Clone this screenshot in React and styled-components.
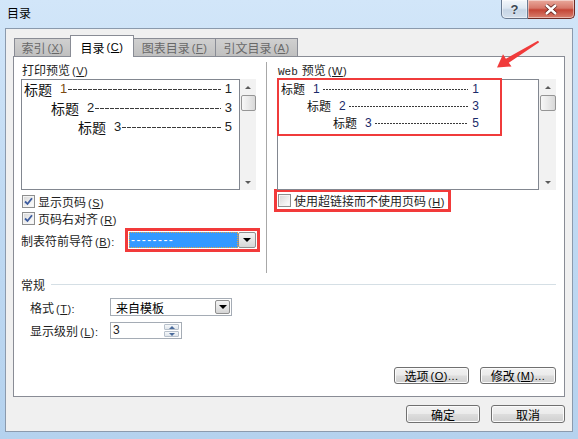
import React from 'react';
import styled, { createGlobalStyle } from 'styled-components';

const GlobalStyle = createGlobalStyle`
  *, *::before, *::after { box-sizing: border-box; }
  html, body { margin: 0; padding: 0; }
  body {
    font-family: "Liberation Sans", "Noto Sans CJK SC", sans-serif;
    font-size: 12px;
    color: #1e1e1e;
  }
`;

const Window = styled.div`
  position: relative;
  width: 578px;
  height: 439px;
  display: flex;
  flex-direction: column;
  overflow: hidden;
  background: linear-gradient(180deg, #d2e6f9 0%, #c0daf3 45%, #b5d2ee 100%);
`;

const TitleBar = styled.div`
  height: 28px;
  flex: none;
  display: flex;
  align-items: flex-start;
  padding: 0 3px 0 7px;
`;

const Caption = styled.div`
  flex: 1;
  line-height: 28px;
  font-size: 12px;
  color: #000;
`;

const CaptionButtons = styled.div`
  display: flex;
  height: 19px;
`;

const CaptionButton = styled.div`
  width: ${p => p.$w}px;
  height: 19px;
  display: flex;
  align-items: center;
  justify-content: center;
  border: 1px solid ${p => (p.$close ? '#6e2a24' : '#6a7c93')};
  border-top: none;
  border-left-width: ${p => (p.$close ? 0 : 1)}px;
  border-radius: ${p => (p.$close ? '0 0 5px 0' : '0 0 0 5px')};
  background: ${p =>
    p.$close
      ? 'linear-gradient(180deg, #e9a99c 0%, #d7786a 45%, #c44536 55%, #d8806f 100%)'
      : 'linear-gradient(180deg, #f3f7fb 0%, #dde7f1 45%, #c6d5e5 55%, #d4e1ee 100%)'};
  box-shadow: inset 0 0 0 1px rgba(255, 255, 255, 0.45);
  font: bold 13px "Liberation Sans", sans-serif;
  color: #3c4652;
  text-shadow: 0 0 2px #fff;
`;

const Client = styled.div`
  flex: 1;
  margin: 0 5px 7px;
  background: #f0f0f0;
  border: 1px solid #8b9aad;
  padding: 6px 7px 0;
  display: flex;
  flex-direction: column;
`;

const TabStrip = styled.div`
  height: 21px;
  display: flex;
  align-items: flex-end;
  padding-left: 2px;
  position: relative;
  z-index: 1;
`;

const Tab = styled.div`
  width: ${p => p.$w}px;
  height: ${p => (p.$active ? 22 : 18)}px;
  margin-bottom: ${p => (p.$active ? -1 : 0)}px;
  margin-left: -1px;
  display: flex;
  align-items: center;
  justify-content: center;
  border: 1px solid #898c95;
  border-bottom: none;
  background: ${p => (p.$active ? '#ffffff' : 'linear-gradient(180deg, #d0d0d0, #c0c0c0)')};
  color: ${p => (p.$active ? '#000' : '#686868')};
  font-size: 12px;
  padding-top: ${p => (p.$active ? 1 : 0)}px;
`;

const Key = styled.span`
  font-size: 11px;
  margin-left: 2px;
  letter-spacing: 0.5px;
  u { text-underline-offset: 1px; }
`;

const TabPage = styled.div`
  height: 341px;
  flex: none;
  background: #ffffff;
  border: 1px solid #898c95;
  display: flex;
  flex-direction: column;
`;

const TopSection = styled.div`
  height: 216px;
  display: flex;
`;

const LeftColumn = styled.div`
  width: 252px;
  padding: 7px 0 0 7px;
`;

const Divider = styled.div`
  width: 1px;
  margin-top: 5px;
  background: #a8a8a8;
`;

const RightColumn = styled.div`
  flex: 1;
  padding: 7px 8px 0 10px;
`;

const SectionLabel = styled.div`
  height: 15px;
  line-height: 14px;
  font-size: 12px;
  padding-left: 1px;
`;

const Mono = styled.span`
  font-family: "Liberation Mono", monospace;
  font-size: 11px;
  margin-right: 4px;
`;

const Preview = styled.div`
  width: ${p => p.$w}px;
  height: 111px;
  display: flex;
`;

const PreviewBox = styled.div`
  flex: 1;
  position: relative;
  background: #fff;
  border: 1px solid #828790;
`;

const Track = styled.div`
  width: ${p => p.$w}px;
  display: flex;
  flex-direction: column;
  align-items: center;
  background: #f2f2f2;
`;

const ArrowCell = styled.div`
  height: 16px;
  display: flex;
  align-items: center;
  justify-content: center;
`;

const Triangle = styled.span`
  width: 0;
  height: 0;
  border-left: 3.5px solid transparent;
  border-right: 3.5px solid transparent;
  ${p => (p.$down ? 'border-top: 3.5px solid #5a5a5a;' : 'border-bottom: 3.5px solid #5a5a5a;')}
`;

const Thumb = styled.div`
  width: calc(100% - 1px);
  height: 16px;
  border: 1px solid #959595;
  border-radius: 2px;
  background: linear-gradient(90deg, #f7f7f7 0%, #e9e9e9 50%, #d8d8d8 100%);
`;

const TrackFill = styled.div`
  flex: 1;
`;

const EntryList = styled.div`
  width: ${p => p.$w};
  padding: ${p => p.$pad};
`;

const Entry = styled.div`
  display: flex;
  align-items: center;
  height: ${p => p.$h}px;
  padding-left: ${p => p.$indent}px;
  font-size: ${p => p.$size}px;
  color: #111;
`;

const Heading = styled.span`
  font-family: "Noto Sans CJK SC", sans-serif;
`;

const Num = styled.span`
  margin-left: ${p => p.$gap}px;
  font-size: ${p => p.$size}px;
  color: ${p => p.$color};
`;

const Leader = styled.span`
  flex: 1;
  height: 1px;
  margin: 2px ${p => p.$after}px 0 ${p => p.$before}px;
  background: repeating-linear-gradient(
    90deg,
    #3a3a3a 0 ${p => p.$dash}px,
    transparent ${p => p.$dash}px ${p => p.$dash + 1}px
  );
`;

const Callout = styled.div`
  position: absolute;
  top: -2px;
  left: -1px;
  width: 225px;
  height: 58px;
  border: 2px solid #f03b3b;
  pointer-events: none;
`;

const CheckRow = styled.div`
  display: flex;
  align-items: center;
  height: 17px;
  gap: 3px;
  padding-left: 1px;
  margin-top: ${p => p.$mt || 0}px;
  font-size: 12px;
`;

const CheckBox = styled.span`
  width: 13px;
  height: 13px;
  flex: none;
  display: flex;
  align-items: center;
  justify-content: center;
  border: 1px solid #8e8f8f;
  background: linear-gradient(135deg, #d6d6d6 0%, #f4f4f4 70%, #ffffff 100%);
  box-shadow: inset 0 0 0 1px #f4f4f4;
`;

const Highlight = styled.div`
  border: 3px solid #f23a3a;
  display: ${p => (p.$inline ? 'inline-flex' : 'flex')};
  align-items: center;
`;

const LeaderRow = styled.div`
  display: flex;
  align-items: center;
  height: 24px;
  margin-top: 1px;
`;

const RowLabel = styled.div`
  width: ${p => p.$w}px;
  flex: none;
  font-size: 12px;
`;

const Combo = styled.div`
  width: ${p => p.$w}px;
  height: ${p => p.$h}px;
  display: flex;
  padding: 1px;
  background: #fff;
  border: ${p => (p.$bare ? 'none' : '1px solid #a5acb5')};
`;

const ComboField = styled.div`
  flex: 1;
  display: flex;
  align-items: center;
  padding-left: ${p => (p.$selected ? 2 : 4)}px;
  font-size: 12px;
  background: ${p => (p.$selected ? '#3399ff' : 'transparent')};
  color: ${p => (p.$selected ? '#fff' : '#000')};
  outline: ${p => (p.$selected ? '1px dotted #e8a040' : 'none')};
  outline-offset: -1px;
  letter-spacing: ${p => (p.$selected ? 1.4 : 0)}px;
`;

const DropButton = styled.div`
  width: ${p => p.$w}px;
  display: flex;
  align-items: center;
  justify-content: center;
  border: 1px solid #8f8f8f;
  border-radius: 2px;
  background: linear-gradient(180deg, #f4f4f4 0%, #e6e6e6 50%, #d5d5d5 100%);
`;

const DropGlyph = styled.span`
  width: 0;
  height: 0;
  border-left: 4px solid transparent;
  border-right: 4px solid transparent;
  border-top: 4px solid #000;
`;

const GeneralSection = styled.div`
  flex: 1;
  display: flex;
  flex-direction: column;
`;

const GroupHeader = styled.div`
  display: flex;
  align-items: center;
  height: 20px;
  margin-top: 1px;
  padding: 0 8px 0 7px;
  font-size: 12px;
`;

const GroupLine = styled.div`
  flex: 1;
  height: 1px;
  margin-left: 6px;
  background: #d5dfe5;
`;

const FieldRow = styled.div`
  display: flex;
  align-items: center;
  margin-top: ${p => p.$mt}px;
  padding-left: 16px;
`;

const Spin = styled.div`
  width: 72px;
  height: 17px;
  display: flex;
  padding: 1px;
  border: 1px solid #a5acb5;
  background: #fff;
`;

const SpinValue = styled.div`
  flex: 1;
  font-size: 12px;
  line-height: 13px;
  padding-left: 1px;
`;

const SpinButtons = styled.div`
  width: 15px;
  margin-right: 1px;
  display: flex;
  flex-direction: column;
  gap: 1px;
`;

const SpinHalf = styled.div`
  flex: 1;
  display: flex;
  align-items: center;
  justify-content: center;
  border: 1px solid #b7c0cb;
  border-radius: 1px;
  background: linear-gradient(180deg, #f6f8fa, #dfe5eb);
`;

const SpinTriangle = styled.span`
  width: 0;
  height: 0;
  border-left: 3px solid transparent;
  border-right: 3px solid transparent;
  ${p => (p.$down ? 'border-top: 3px solid #4b6b9b;' : 'border-bottom: 3px solid #4b6b9b;')}
`;

const Spacer = styled.div`
  flex: 1;
`;

const ButtonRow = styled.div`
  display: flex;
  justify-content: flex-end;
  gap: ${p => p.$gap}px;
  padding: 0 ${p => p.$right}px ${p => p.$bottom}px 0;
  margin-top: ${p => p.$top || 0}px;
`;

const Button = styled.div`
  width: ${p => p.$w}px;
  height: ${p => p.$h}px;
  display: flex;
  align-items: center;
  justify-content: center;
  font-size: 12px;
  color: #000;
  border: 1px solid #707070;
  border-radius: 3px;
  background: linear-gradient(180deg, #f2f2f2 0%, #ebebeb 48%, #dddddd 52%, #cfcfcf 100%);
  box-shadow: inset 0 0 0 1px #fbfbfb;
`;

const Annotation = styled.svg`
  position: absolute;
  left: 494px;
  top: 38px;
  pointer-events: none;
`;

const tabs = [
  { label: '索引', key: 'X', w: 57 },
  { label: '目录', key: 'C', w: 64, active: true },
  { label: '图表目录', key: 'F', w: 83 },
  { label: '引文目录', key: 'A', w: 83 },
];

const levels = [
  { n: '1', page: '1' },
  { n: '2', page: '3' },
  { n: '3', page: '5' },
];

function Mnemonic({ k, tail = '' }) {
  return (
    <Key>
      (<u>{k}</u>){tail}
    </Key>
  );
}

function ScrollBar({ w }) {
  return (
    <Track $w={w}>
      <ArrowCell>
        <Triangle />
      </ArrowCell>
      <Thumb />
      <TrackFill />
      <ArrowCell>
        <Triangle $down />
      </ArrowCell>
    </Track>
  );
}

function Check({ checked }) {
  return (
    <CheckBox>
      {checked && (
        <svg width="9" height="9" viewBox="0 0 9 9">
          <path d="M1 4.5 L3.5 7 L8 1.2" fill="none" stroke="#3d5c9f" strokeWidth="1.8" />
        </svg>
      )}
    </CheckBox>
  );
}

export default function App() {
  return (
    <>
      <GlobalStyle />
      <Window>
        <TitleBar>
          <Caption>目录</Caption>
          <CaptionButtons>
            <CaptionButton $w={27}>?</CaptionButton>
            <CaptionButton $w={47} $close>
              <svg width="14" height="11" viewBox="0 0 14 11">
                <path d="M2 1 L12 10 M12 1 L2 10" stroke="#5b1d17" strokeWidth="4" />
                <path d="M2 1 L12 10 M12 1 L2 10" stroke="#ffffff" strokeWidth="2.4" />
              </svg>
            </CaptionButton>
          </CaptionButtons>
        </TitleBar>

        <Client>
          <TabStrip>
            {tabs.map(t => (
              <Tab key={t.key} $w={t.w} $active={t.active}>
                {t.label}
                <Mnemonic k={t.key} />
              </Tab>
            ))}
          </TabStrip>

          <TabPage>
            <TopSection>
              <LeftColumn>
                <SectionLabel>
                  打印预览
                  <Mnemonic k="V" />
                </SectionLabel>
                <Preview $w={235}>
                  <PreviewBox>
                    <EntryList $w="auto" $pad="0 7px 0 2px" style={{ marginTop: -1 }}>
                      {levels.map((l, i) => (
                        <Entry key={l.n} $h={19} $indent={i * 27} $size={14}>
                          <Heading>标题</Heading>
                          <Num $gap={8} $size={13} $color={i === 0 ? '#7a4a10' : '#222'}>
                            {l.n}
                          </Num>
                          <Leader $before={1} $after={4} $dash={4} />
                          <Num $gap={0} $size={13} $color="#222">
                            {l.page}
                          </Num>
                        </Entry>
                      ))}
                    </EntryList>
                  </PreviewBox>
                  <ScrollBar w={16} />
                </Preview>

                <CheckRow $mt={3}>
                  <Check checked />
                  <span>
                    显示页码
                    <Mnemonic k="S" />
                  </span>
                </CheckRow>
                <CheckRow>
                  <Check checked />
                  <span>
                    页码右对齐
                    <Mnemonic k="R" />
                  </span>
                </CheckRow>

                <LeaderRow>
                  <RowLabel $w={104}>
                    制表符前导符
                    <Mnemonic k="B" tail=":" />
                  </RowLabel>
                  <Highlight>
                    <Combo $w={129} $h={18} $bare>
                      <ComboField $selected>--------</ComboField>
                      <DropButton $w={18}>
                        <DropGlyph />
                      </DropButton>
                    </Combo>
                  </Highlight>
                </LeaderRow>
              </LeftColumn>

              <Divider />

              <RightColumn>
                <SectionLabel>
                  <Mono>Web</Mono>
                  预览
                  <Mnemonic k="W" />
                </SectionLabel>
                <Preview $w={279}>
                  <PreviewBox>
                    <EntryList $w="201px" $pad="0 0 0 3px">
                      {levels.map((l, i) => (
                        <Entry key={l.n} $h={17} $indent={i * 26} $size={12}>
                          <Heading>标题</Heading>
                          <Num $gap={8} $size={12} $color="#1a2a6a">
                            {l.n}
                          </Num>
                          <Leader $before={3} $after={4} $dash={2} />
                          <Num $gap={0} $size={12} $color="#1a2a6a">
                            {l.page}
                          </Num>
                        </Entry>
                      ))}
                    </EntryList>
                    <Callout />
                  </PreviewBox>
                  <ScrollBar w={17} />
                </Preview>

                <Highlight $inline style={{ marginTop: -1, marginLeft: -3 }}>
                  <CheckRow style={{ paddingRight: 3 }}>
                    <Check />
                    <span>
                      使用超链接而不使用页码
                      <Mnemonic k="H" />
                    </span>
                  </CheckRow>
                </Highlight>
              </RightColumn>
            </TopSection>

            <GeneralSection>
              <GroupHeader>
                常规
                <GroupLine />
              </GroupHeader>

              <FieldRow $mt={4}>
                <RowLabel $w={80}>
                  格式
                  <Mnemonic k="T" tail=":" />
                </RowLabel>
                <Combo $w={122} $h={18}>
                  <ComboField>来自模板</ComboField>
                  <DropButton $w={15}>
                    <DropGlyph />
                  </DropButton>
                </Combo>
              </FieldRow>

              <FieldRow $mt={6}>
                <RowLabel $w={80}>
                  显示级别
                  <Mnemonic k="L" tail=":" />
                </RowLabel>
                <Spin>
                  <SpinValue>3</SpinValue>
                  <SpinButtons>
                    <SpinHalf>
                      <SpinTriangle />
                    </SpinHalf>
                    <SpinHalf>
                      <SpinTriangle $down />
                    </SpinHalf>
                  </SpinButtons>
                </Spin>
              </FieldRow>

              <Spacer />

              <ButtonRow $gap={11} $right={8} $bottom={12}>
                <Button $w={75} $h={17}>
                  选项
                  <Mnemonic k="O" tail="..." />
                </Button>
                <Button $w={76} $h={17}>
                  修改
                  <Mnemonic k="M" tail="..." />
                </Button>
              </ButtonRow>
            </GeneralSection>
          </TabPage>

          <ButtonRow $gap={11} $right={0} $bottom={0} $top={8}>
            <Button $w={74} $h={18}>确定</Button>
            <Button $w={74} $h={18}>取消</Button>
          </ButtonRow>
        </Client>

        <Annotation width="50" height="34" viewBox="0 0 50 34">
          <polygon
            points="3,29.5 17.5,28.5 14.8,24.8 45.2,4.2 44,2.8 11.9,20.8 9,16.2"
            fill="#f03b3b"
          />
        </Annotation>
      </Window>
    </>
  );
}
